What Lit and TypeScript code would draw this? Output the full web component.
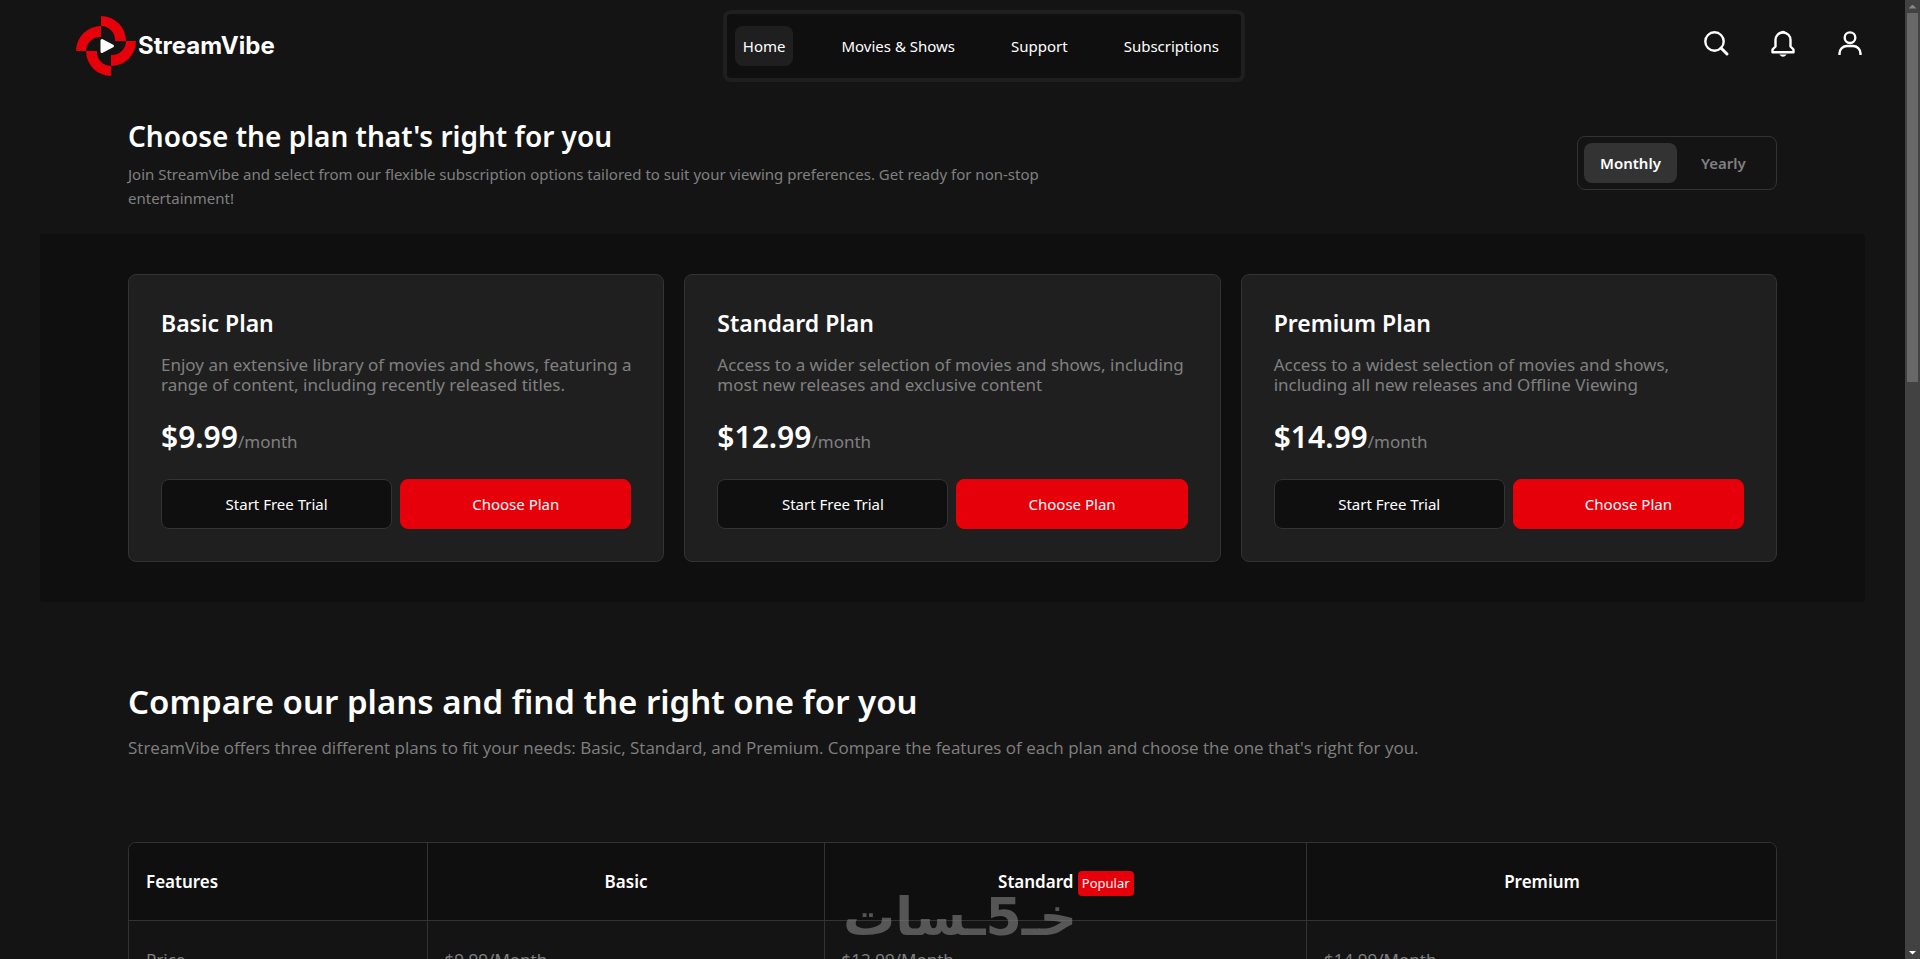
import { LitElement, html, css } from "lit";
import { customElement, property, state } from "lit/decorators.js";
import { classMap } from "lit/directives/class-map.js";

interface Plan {
  name: string;
  text: string;
  monthly: string;
  yearly: string;
}

const PLANS: Plan[] = [
  {
    name: "Basic",
    text: "Enjoy an extensive library of movies and shows, featuring a range of content, including recently released titles.",
    monthly: "9.99",
    yearly: "99.99",
  },
  {
    name: "Standard",
    text: "Access to a wider selection of movies and shows, including most new releases and exclusive content",
    monthly: "12.99",
    yearly: "129.99",
  },
  {
    name: "Premium",
    text: "Access to a widest selection of movies and shows, including all new releases and Offline Viewing",
    monthly: "14.99",
    yearly: "149.99",
  },
];

const LINKS = ["Home", "Movies & Shows", "Support", "Subscriptions"];

@customElement("site-header")
export class SiteHeader extends LitElement {
  static styles = css`
    :host {
      display: flex;
      justify-content: space-between;
      align-items: center;
      padding: 10px 40px 10px 76px;
    }
    .logo {
      display: flex;
      align-items: center;
      gap: 2px;
      color: #fff;
      text-decoration: none;
      font: 700 24px/32px Inter, sans-serif;
    }
    .logo svg {
      width: 60px;
      height: 60px;
    }
    .nav {
      display: flex;
      align-items: center;
      gap: 40px;
      height: 64px;
      padding: 0 14px 0 8px;
      border: 4px solid #1f1f1f;
      border-radius: 8px;
      background: #0f0f0f;
    }
    .link {
      padding: 8px;
      border-radius: 8px;
      color: #fff;
      font-size: 15px;
      line-height: 24px;
      text-decoration: none;
    }
    .current {
      background: #1f1f1f;
    }
    .tools {
      display: flex;
      align-items: center;
      gap: 37px;
      padding: 0 0 6px 8px;
    }
    .tool {
      display: block;
      width: 30px;
      height: 30px;
      padding: 0;
      border: 0;
      background: none;
      color: #fff;
      cursor: pointer;
    }
    .tool svg {
      display: block;
      width: 30px;
      height: 30px;
      fill: none;
      stroke: currentColor;
      stroke-width: 2.4;
    }
  `;

  render() {
    return html`
      <a class="logo" href="#home">
        <svg viewBox="0 0 60 60" aria-hidden="true">
          <g fill="#e60009">
            <path d="M25 0A25 25 0 0 1 50 25H39A14 14 0 0 0 25 10Z" />
            <path d="M60 25A25 25 0 0 1 35 50V39A14 14 0 0 0 50 25Z" />
            <path d="M35 60A25 25 0 0 1 10 35H21A14 14 0 0 0 35 50Z" />
            <path d="M0 35A25 25 0 0 1 25 10V21A14 14 0 0 0 10 35Z" />
          </g>
          <path
            d="M26 24.500L36.500 30L26 35.500Z"
            fill="#fff"
            stroke="#fff"
            stroke-width="3"
            stroke-linejoin="round"
          />
        </svg>
        <span>StreamVibe</span>
      </a>
      <nav class="nav">
        ${LINKS.map(
          (l, i) => html`<a class=${classMap({ link: true, current: i === 0 })} href="#">${l}</a>`,
        )}
      </nav>
      <div class="tools">
        <button class="tool" aria-label="Search">
          <svg viewBox="0 0 30 30">
            <circle cx="13.500" cy="13.500" r="9.200" />
            <path d="M20 20L26 26" stroke-width="3" stroke-linecap="round" />
          </svg>
        </button>
        <button class="tool" aria-label="Notifications">
          <svg viewBox="0 0 30 30">
            <path
              d="M15 4.500C10.500 4.500 7.500 8 7.500 12V18.500L4.500 21.500V24.300H25.500V21.500L22.500 18.500V12C22.500 8 19.500 4.500 15 4.500Z"
              stroke-linejoin="round"
            />
            <path d="M12.500 4Q15 1.500 17.500 4Z" fill="currentColor" stroke="none" />
            <path d="M11.300 26.500H18.700Q15 31 11.300 26.500Z" fill="currentColor" stroke="none" />
          </svg>
        </button>
        <button class="tool" aria-label="Account">
          <svg viewBox="0 0 30 30">
            <circle cx="15" cy="9.700" r="5.300" />
            <path d="M4.500 27V25.500C4.500 21 8 18 12 18H18C22 18 25.500 21 25.500 25.500V27" />
          </svg>
        </button>
      </div>
    `;
  }
}

@customElement("plan-card")
export class PlanCard extends LitElement {
  @property({ attribute: false }) plan!: Plan;
  @property({ type: Boolean }) yearly = false;

  static styles = css`
    :host {
      display: block;
      padding: 32px;
      border: 1px solid #333;
      border-radius: 8px;
      background: #1f1f1f;
    }
    .name {
      margin: 0 0 16px;
      font-size: 23px;
      font-weight: 600;
      line-height: 32px;
    }
    .text {
      margin: 0 -2px 24px 0;
      color: #808080;
      font-size: 17px;
      line-height: 20px;
    }
    .price {
      margin: 0 0 24px;
      line-height: 36px;
      font-size: 30px;
      font-weight: 600;
    }
    .period {
      color: #808080;
      font-size: 17px;
      font-weight: 400;
      line-height: 20px;
    }
    .actions {
      display: grid;
      grid-template-columns: 1fr 1fr;
      gap: 8px;
    }
    .action {
      height: 50px;
      border: 1px solid #333;
      border-radius: 8px;
      background: #0f0f0f;
      color: #fff;
      font: inherit;
      font-size: 15px;
      cursor: pointer;
    }
    .primary {
      border-color: #e60009;
      background: #e60009;
    }
  `;

  render() {
    const p = this.plan;
    return html`
      <h3 class="name">${p.name} Plan</h3>
      <p class="text">${p.text}</p>
      <p class="price">
        $${this.yearly ? p.yearly : p.monthly}<span class="period">/${this.yearly ? "year" : "month"}</span>
      </p>
      <div class="actions">
        <button class="action">Start Free Trial</button>
        <button class="action primary">Choose Plan</button>
      </div>
    `;
  }
}

@customElement("app-root")
export class AppRoot extends LitElement {
  @state() private yearly = false;

  static styles = css`
    :host {
      position: relative;
      display: grid;
      grid-template-columns: 1fr 15px;
      height: 100vh;
      overflow: hidden;
      background: #141414;
      color: #fff;
      font-family: "Noto Sans", sans-serif;
    }
    .page {
      min-width: 0;
      min-height: 0;
      overflow: hidden;
    }
    .intro {
      display: flex;
      justify-content: space-between;
      align-items: center;
      padding: 24px 128px 24px;
    }
    .lead {
      max-width: 920px;
    }
    .title {
      margin: 0 0 6px;
      font-size: 28px;
      font-weight: 600;
      line-height: 40px;
    }
    .sub {
      margin: 0;
      color: #808080;
      font-size: 15px;
      line-height: 24px;
    }
    .switch {
      display: flex;
      gap: 8px;
      box-sizing: border-box;
      min-width: 200px;
      padding: 6px;
      border: 1px solid #333;
      border-radius: 8px;
    }
    .choice {
      height: 40px;
      padding: 0 16px;
      border: 0;
      border-radius: 8px;
      background: none;
      color: #808080;
      font: inherit;
      font-size: 15px;
      font-weight: 600;
      cursor: pointer;
    }
    .chosen {
      background: #333;
      color: #fff;
    }
    .plans {
      display: grid;
      grid-template-columns: repeat(3, 1fr);
      gap: 20px;
      margin: 0 40px;
      padding: 40px 88px;
      border-radius: 4px;
      background: #0f0f0f;
    }
    .compare {
      padding: 76px 128px 0;
    }
    .heading {
      margin: 0 0 8px;
      font-size: 33px;
      font-weight: 600;
      line-height: 48px;
    }
    .note {
      margin: 0 0 80px;
      color: #808080;
      font-family: "Open Sans", "Noto Sans", sans-serif;
      font-size: 17px;
      line-height: 28px;
    }
    .frame {
      border: 1px solid #333;
      border-radius: 8px;
      overflow: hidden;
    }
    .table {
      width: 100%;
      border-collapse: collapse;
      table-layout: fixed;
      font-size: 17px;
      line-height: 28px;
    }
    .c1 {
      width: 18.1%;
    }
    .c2 {
      width: 24.1%;
    }
    .c3 {
      width: 29.3%;
    }
    .table th,
    .table td {
      padding: 25px 16px 24px 17px;
      border-right: 1px solid #333;
      text-align: left;
    }
    .table th:last-child,
    .table td:last-child {
      border-right: 0;
    }
    .table th {
      border-bottom: 1px solid #333;
      background: #0f0f0f;
      font-weight: 600;
      text-align: center;
    }
    .table th:first-child {
      text-align: left;
    }
    .table td {
      color: #808080;
    }
    .badge {
      display: inline-block;
      padding: 0 4px;
      border-radius: 4px;
      background: #e60009;
      font-size: 13px;
      font-weight: 400;
      line-height: 25px;
    }
    .mark {
      position: absolute;
      bottom: 12px;
      left: 0;
      right: 0;
      text-align: center;
      pointer-events: none;
      color: #7b7b7b;
      opacity: 0.65;
      font: 700 52px/60px "DejaVu Sans", sans-serif;
    }
    .scroll {
      display: grid;
      grid-template-rows: 13px 1fr 13px;
      justify-items: center;
      background: #424242;
    }
    .arrow {
      align-self: center;
      width: 8px;
      height: 4px;
      background: #868686;
      clip-path: polygon(50% 0, 100% 100%, 0 100%);
    }
    .down {
      background: #fff;
      clip-path: polygon(0 0, 100% 0, 50% 100%);
    }
    .thumb {
      width: 11px;
      height: 39.6%;
      background: #686868;
    }
  `;

  private choice(label: string, yearly: boolean) {
    const on = this.yearly === yearly;
    return html`<button
      class=${classMap({ choice: true, chosen: on })}
      aria-pressed=${on}
      @click=${() => (this.yearly = yearly)}
    >
      ${label}
    </button>`;
  }

  render() {
    return html`
      <div class="page">
        <site-header></site-header>
        <section class="intro">
          <div class="lead">
            <h1 class="title">Choose the plan that's right for you</h1>
            <p class="sub">
              Join StreamVibe and select from our flexible subscription options tailored to suit
              your viewing preferences. Get ready for non-stop entertainment!
            </p>
          </div>
          <div class="switch" role="group" aria-label="Billing period">
            ${this.choice("Monthly", false)}${this.choice("Yearly", true)}
          </div>
        </section>
        <section class="plans">
          ${PLANS.map((p) => html`<plan-card .plan=${p} ?yearly=${this.yearly}></plan-card>`)}
        </section>
        <section class="compare">
          <h2 class="heading">Compare our plans and find the right one for you</h2>
          <p class="note">
            StreamVibe offers three different plans to fit your needs: Basic, Standard, and Premium.
            Compare the features of each plan and choose the one that's right for you.
          </p>
          <div class="frame">
            <table class="table">
              <colgroup>
                <col class="c1" />
                <col class="c2" />
                <col class="c3" />
                <col />
              </colgroup>
              <thead>
                <tr>
                  <th scope="col">Features</th>
                  <th scope="col">Basic</th>
                  <th scope="col">Standard <span class="badge">Popular</span></th>
                  <th scope="col">Premium</th>
                </tr>
              </thead>
              <tbody>
                <tr>
                  <td>Price</td>
                  ${PLANS.map((p) => html`<td>$${p.monthly}/Month</td>`)}
                </tr>
              </tbody>
            </table>
          </div>
        </section>
      </div>
      <div class="scroll" aria-hidden="true">
        <div class="arrow"></div>
        <div class="thumb"></div>
        <div class="arrow down"></div>
      </div>
      <div class="mark" dir="rtl" lang="ar">خـ5ـسات</div>
    `;
  }
}
